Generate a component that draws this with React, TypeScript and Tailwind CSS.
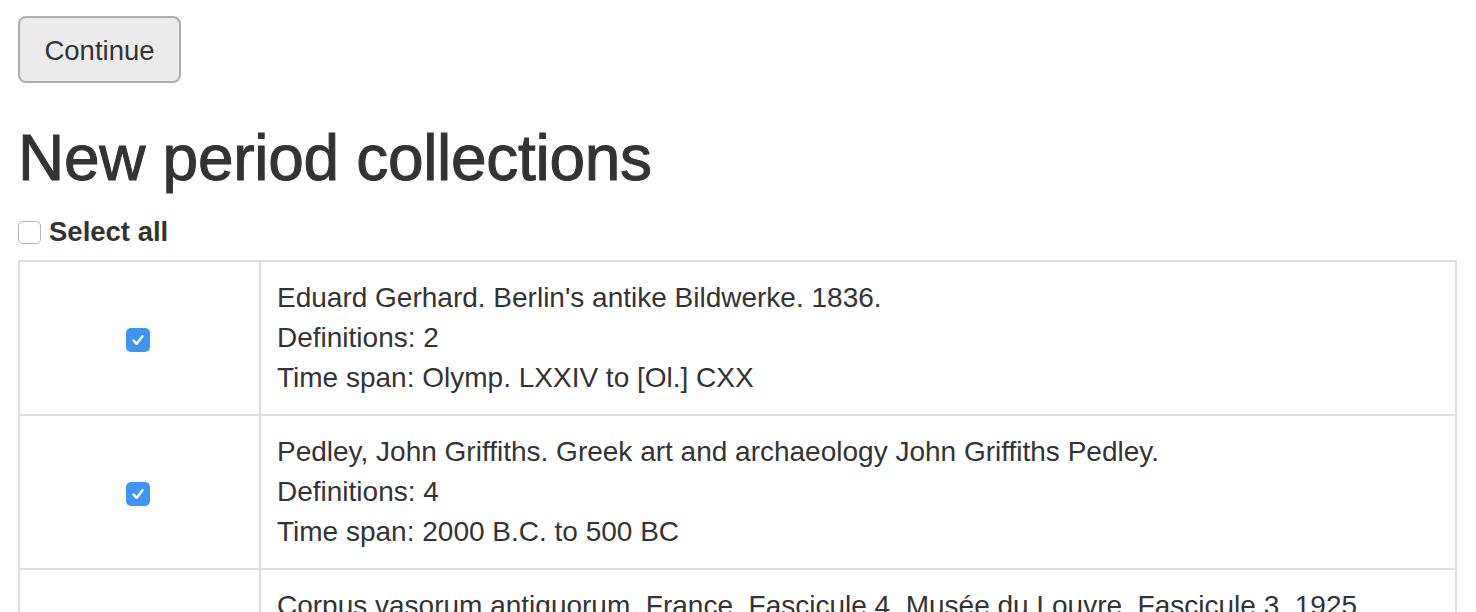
const rows = [
  {
    title: "Eduard Gerhard. Berlin's antike Bildwerke. 1836.",
    defs: 2,
    span: "Olymp. LXXIV to [Ol.] CXX",
  },
  {
    title: "Pedley, John Griffiths. Greek art and archaeology John Griffiths Pedley.",
    defs: 4,
    span: "2000 B.C. to 500 BC",
  },
  {
    title: "Corpus vasorum antiquorum. France. Fascicule 4. Musée du Louvre. Fascicule 3. 1925",
    defs: 3,
    span: "700 BC to 300 BC",
  },
];

function CheckBox({ checked }: { checked: boolean }) {
  if (checked) {
    return (
      <span className="inline-flex w-[24px] h-[24px] rounded-[5px] bg-[#3d95f7] items-center justify-center">
        <svg width="16" height="16" viewBox="0 0 16 16" fill="none">
          <path d="M3.5 8.5 L6.7 11.8 L12.5 4.2" stroke="white" strokeWidth="2.4" strokeLinecap="round" strokeLinejoin="round" />
        </svg>
      </span>
    );
  }
  return <span className="inline-block w-[23px] h-[23px] rounded-[5px] border border-[#b5b5b5] bg-white" />;
}

export default function App() {
  return (
    <div className="bg-white min-h-screen px-[18px] pt-[16px] text-[#333] font-['Liberation_Sans',Arial,sans-serif] text-[28px] leading-[40px]">
      <button className="h-[67px] w-[163px] rounded-[8px] border-2 border-[#adadad] bg-[#ebebeb] text-[27.5px] pt-[3px] text-[#333]">
        Continue
      </button>

      <h1 className="mt-[37px] text-[64px] leading-[76px] font-normal tracking-[-0.3px] [-webkit-text-stroke:1px_#333]">
        New period collections
      </h1>

      <label className="mt-[16px] flex items-center gap-[8px]">
        <CheckBox checked={false} />
        <span className="font-bold text-[27.5px]">Select all</span>
      </label>

      <table className="mt-[8px] w-[1439px] border-collapse border-2 border-[#ddd]">
        <tbody>
          {rows.map((r) => (
            <tr key={r.title} className="border-t-2 border-[#ddd]">
              <td className="w-[241px] border-r-2 border-[#ddd] text-center align-middle py-[16px] pr-[4px]">
                <span className="inline-flex align-middle">
                  <CheckBox checked />
                </span>
              </td>
              <td className="px-[16px] py-[16px] align-top">
                <div>{r.title}</div>
                <div>Definitions: {r.defs}</div>
                <div>Time span: {r.span}</div>
              </td>
            </tr>
          ))}
        </tbody>
      </table>
    </div>
  );
}
